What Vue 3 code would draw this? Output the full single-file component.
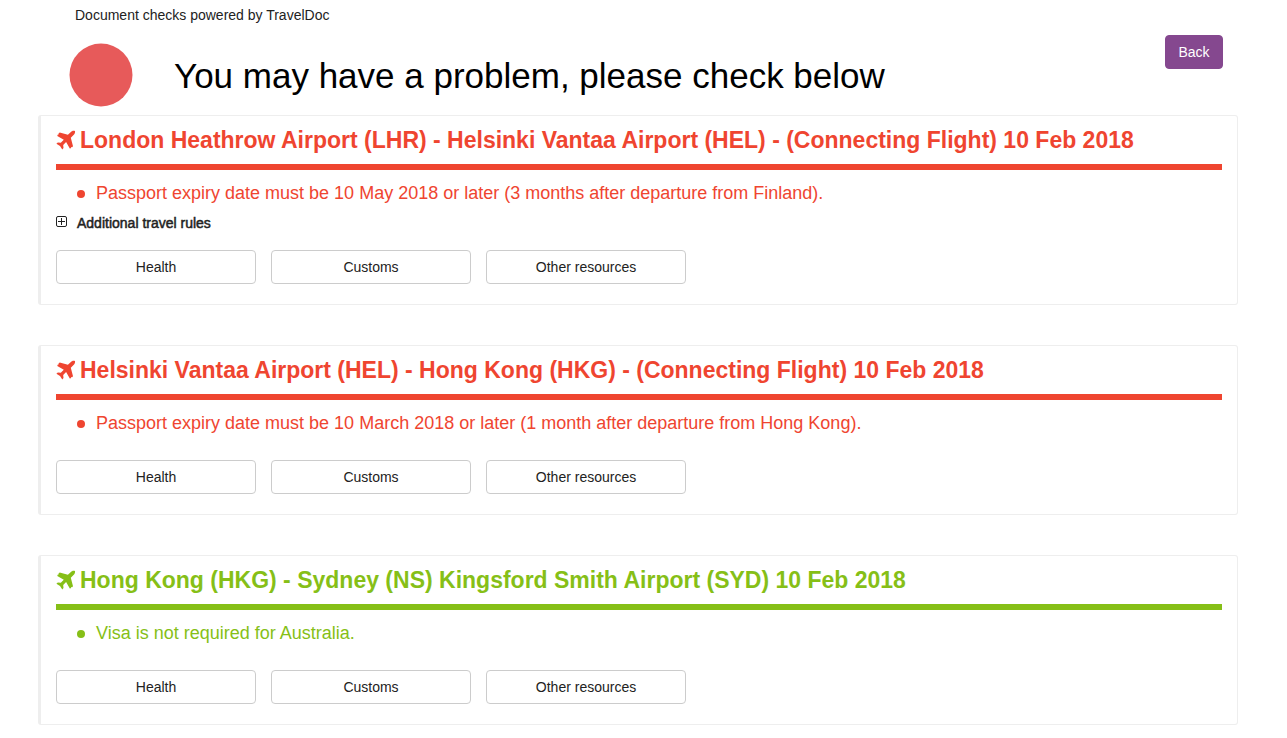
<script setup>
const links = ['Health', 'Customs', 'Other resources']
const legs = [
  {
    title: 'London Heathrow Airport (LHR) - Helsinki Vantaa Airport (HEL) - (Connecting Flight) 10 Feb 2018',
    status: 'warn',
    note: 'Passport expiry date must be 10 May 2018 or later (3 months after departure from Finland).',
    rules: true,
  },
  {
    title: 'Helsinki Vantaa Airport (HEL) - Hong Kong (HKG) - (Connecting Flight) 10 Feb 2018',
    status: 'warn',
    note: 'Passport expiry date must be 10 March 2018 or later (1 month after departure from Hong Kong).',
    rules: false,
  },
  {
    title: 'Hong Kong (HKG) - Sydney (NS) Kingsford Smith Airport (SYD) 10 Feb 2018',
    status: 'ok',
    note: 'Visa is not required for Australia.',
    rules: false,
  },
]
</script>

<template>
  <main class="page">
    <p class="powered">Document checks powered by TravelDoc</p>
    <header class="top">
      <svg class="light" viewBox="0 0 64 64" aria-hidden="true"><circle cx="32" cy="32" r="31.5" fill="#e75a5a" /></svg>
      <h1>You may have a problem, please check below</h1>
      <button type="button" class="back">Back</button>
    </header>
    <section v-for="leg in legs" :key="leg.title" class="card" :class="leg.status">
      <h2>
        <svg class="plane" viewBox="0 0 20 20" aria-hidden="true">
          <path fill="currentColor" d="M19 1.100C19.300 2.400 18.800 3.800 17.800 4.800L14.800 7.800l2.200 8.400-.9 1.100-.8-.3-.5 1.200-1 .2-3.700-6.300L7.200 15l.3 3-1.200 1.600-2.300-3.700L.4 13.700l1.400-1.200 3 .3 3-3.100L1.300 5.900l.3-1.100 1.200-.5-.3-.8 1.200-.9 8.200 2.200 3-2.800c1-1 2.400-1.900 4.100-.9z" />
        </svg>
        <span>{{ leg.title }}</span>
      </h2>
      <ul class="notes">
        <li>{{ leg.note }}</li>
      </ul>
      <button v-if="leg.rules" type="button" class="rules">
        <svg viewBox="0 0 12 12" aria-hidden="true"><rect x=".5" y=".5" width="10" height="10" rx="1.500" /><path d="M2 5.500h7M5.500 2v7" /></svg>
        <span>Additional travel rules</span>
      </button>
      <div class="links">
        <button v-for="link in links" :key="link" type="button">{{ link }}</button>
      </div>
    </section>
  </main>
</template>

<style>
body {
  margin: 0;
  background: #fff;
}
</style>

<style scoped>
.page {
  box-sizing: border-box;
  padding: 5px 49px 13px 38px;
  font-family: "Liberation Sans", Arial, sans-serif;
  font-size: 14px;
  line-height: 20px;
  color: #222;
}
button {
  font: inherit;
  color: inherit;
  cursor: pointer;
}
.powered {
  margin: 0 0 0 37px;
}
.top {
  display: flex;
  align-items: flex-start;
  padding: 0 15px 8px 31px;
}
.light {
  flex: none;
  width: 64px;
  height: 64px;
  margin-top: 18px;
}
h1 {
  flex: 1;
  margin: 31px 0 0 41px;
  font-size: 35px;
  line-height: 40px;
  font-weight: 400;
  color: #000;
}
.back {
  width: 58px;
  height: 34px;
  margin-top: 10px;
  padding: 0;
  border: 1px solid #85488f;
  border-radius: 4px;
  background: #85488f;
  color: #fff;
}
.card {
  padding: 9px 15px 20px;
  border: 1px solid #eee;
  border-left-width: 3px;
  border-radius: 3px;
}
.card + .card {
  margin-top: 40px;
}
h2 {
  display: flex;
  align-items: center;
  gap: 4px;
  margin: 0;
  padding-bottom: 9px;
  border-bottom: 6px solid;
  font-size: 23px;
  line-height: 30px;
  font-weight: 700;
}
.plane {
  flex: none;
  width: 20px;
  height: 20px;
}
.warn h2,
.warn .notes {
  color: #ef4530;
}
.ok h2,
.ok .notes {
  color: #86bf17;
}
.notes {
  margin: 0;
  padding: 10px 0 0 40px;
  font-size: 18px;
  line-height: 26px;
  list-style: none;
}
.notes li {
  display: flex;
  align-items: center;
}
.notes li::before {
  content: "";
  width: 8px;
  height: 8px;
  margin: 2px 11px 0 -19px;
  border-radius: 50%;
  background: currentColor;
}
.rules {
  display: flex;
  align-items: center;
  gap: 9px;
  height: 20px;
  margin-top: 7px;
  padding: 0;
  border: 0;
  background: none;
  -webkit-text-stroke: 0.5px currentColor;
}
.rules svg {
  width: 12px;
  height: 12px;
  margin-bottom: 2px;
  fill: none;
  stroke: #222;
}
.links {
  display: flex;
  gap: 15px;
  margin-top: 24px;
}
.rules + .links {
  margin-top: 17px;
}
.links button {
  width: 200px;
  height: 34px;
  padding: 0;
  border: 1px solid #ccc;
  border-radius: 4px;
  background: #fff;
}
</style>
